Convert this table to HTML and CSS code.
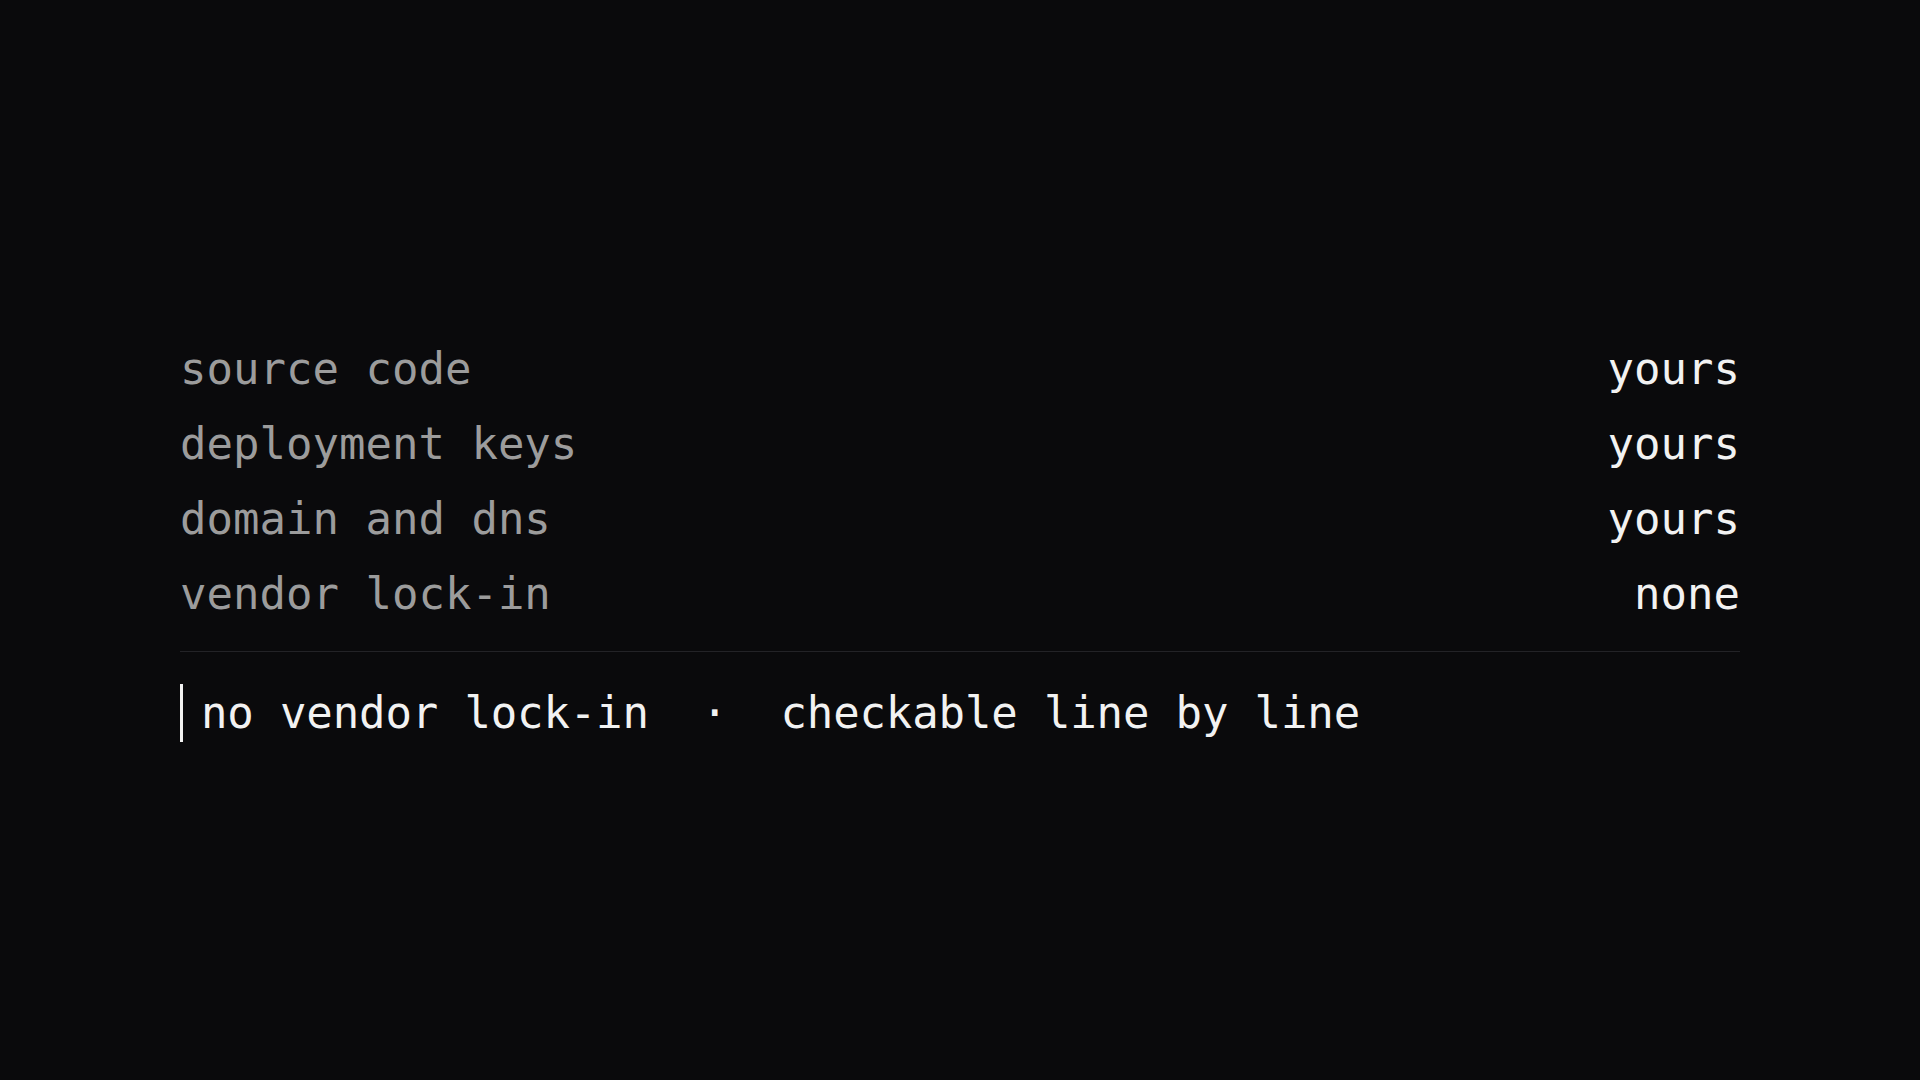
FILE: index.html
```html
<!DOCTYPE html>
<html lang="en">
<head>
<meta charset="utf-8">
<title>ownership</title>
<link rel="stylesheet" href="styles.css">
</head>
<body>
<main class="stage">
  <section class="sheet">
    <ul class="rows">
      <li class="row"><span class="label">source code</span><span class="value">yours</span></li>
      <li class="row"><span class="label">deployment keys</span><span class="value">yours</span></li>
      <li class="row"><span class="label">domain and dns</span><span class="value">yours</span></li>
      <li class="row"><span class="label">vendor lock-in</span><span class="value">none</span></li>
    </ul>
    <div class="rule"></div>
    <p class="footer"><span class="prompt">no vendor lock-in<span class="sep">  ·  </span>checkable line by line</span></p>
  </section>
</main>
</body>
</html>
```
FILE: styles.css
```css
* { box-sizing: border-box; }
html, body {
  margin: 0;
  padding: 0;
  height: 100%;
  background: #0a0a0c;
}
body {
  font-family: "DejaVu Sans Mono", "Liberation Mono", monospace;
  color: #f2f2f2;
}
.stage {
  height: 100%;
  display: flex;
  flex-direction: column;
  justify-content: center;
  padding: 0 180px;
}
.sheet {
  display: flex;
  flex-direction: column;
  margin-top: -8px;
}
.rows {
  list-style: none;
  margin: 0;
  padding: 0 0 20px;
}
.row {
  display: flex;
  justify-content: space-between;
  font-size: 44px;
  line-height: 75px;
}
.label { color: #9c9c9c; }
.value { color: #f2f2f2; }
.rule {
  height: 1px;
  background: #232327;
}
.footer {
  margin: 32px 0 0;
  font-size: 44px;
  line-height: 58px;
  display: flex;
}
.prompt {
  border-left: 3px solid #f2f2f2;
  padding-left: 18px;
  white-space: pre;
  letter-spacing: -0.15px;
}
.sep { color: #f2f2f2; }
```
